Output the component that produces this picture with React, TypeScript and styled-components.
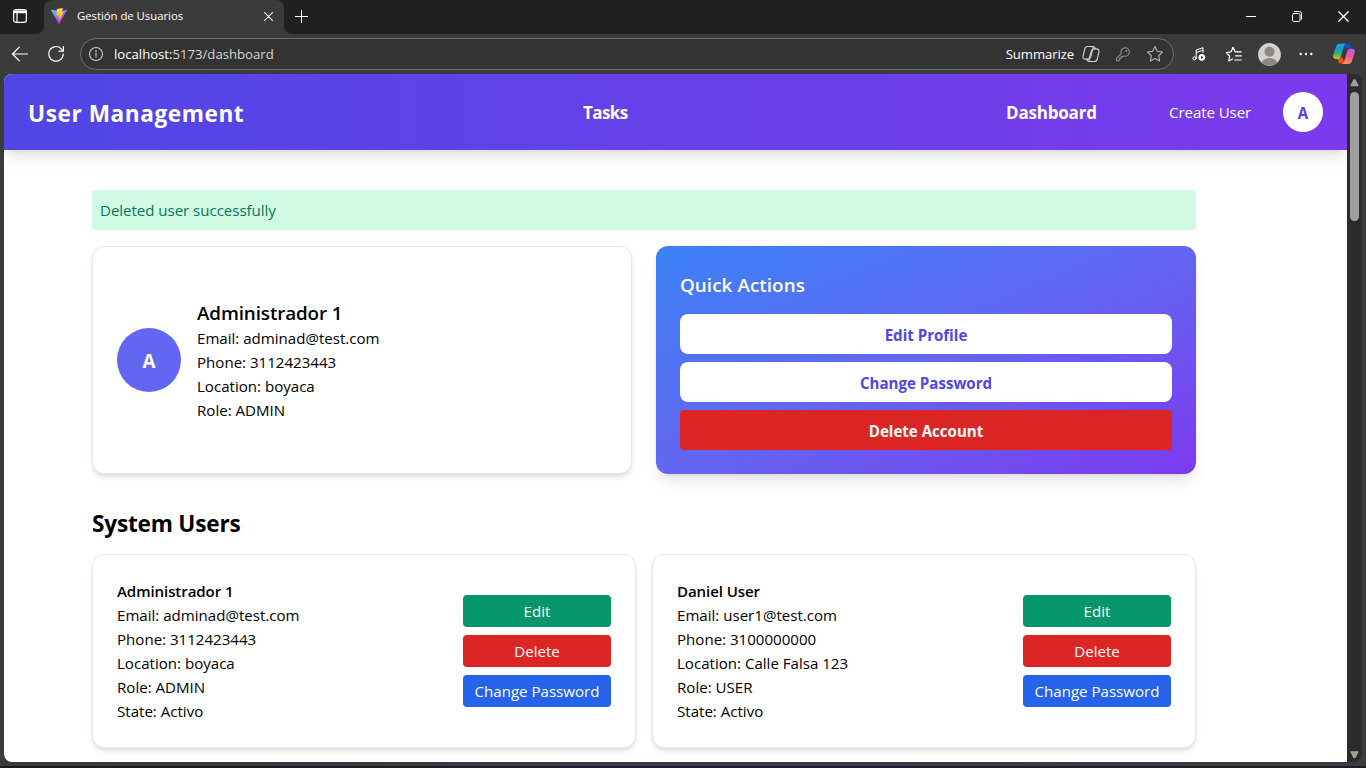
import React from "react";
import styled, { createGlobalStyle, css } from "styled-components";

const GlobalStyle = createGlobalStyle`
  *, *::before, *::after { box-sizing: border-box; }
  body { margin: 0; background: #3b3b3b; overflow: hidden; }
  h1, h2, h3, p { margin: 0; font-size: inherit; font-weight: inherit; }
  button { border: 0; margin: 0; padding: 0; background: none; font: inherit; color: inherit; letter-spacing: inherit; }
  svg { display: block; flex: none; }
`;

const Window = styled.div`
  display: flex;
  flex-direction: column;
  width: 1366px;
  height: 768px;
  background: #3b3b3b;
  font-family: "Open Sans", "Noto Sans", sans-serif;
  overflow: hidden;
`;

/* ---------- browser chrome ---------- */

const TabStrip = styled.div`
  display: flex;
  height: 34px;
  background: #202020;
  color: #fff;
`;

const StripButton = styled.button<{ $width: number }>`
  display: flex;
  align-items: center;
  justify-content: center;
  width: ${(p) => p.$width}px;
  height: 33px;
`;

const TabMenuCorner = styled.div`
  width: 44px;
  background: #3b3b3b;
`;

const TabMenu = styled.div`
  display: flex;
  align-items: center;
  padding: 0 0 2px 12px;
  height: 34px;
  background: #202020;
  border-bottom-right-radius: 8px;
`;

const Tab = styled.div`
  display: flex;
  align-items: center;
  width: 240px;
  height: 34px;
  padding: 0 11px 2px 7px;
  border-radius: 8px 8px 0 0;
  background: #3b3b3b;
`;

const TabTitle = styled.span`
  flex: 1;
  margin: 0 0 2px 10px;
  font-size: 11.4px;
  letter-spacing: -0.05px;
  white-space: nowrap;
`;

const StripRestBase = styled.div`
  flex: 1;
  background: #3b3b3b;
`;

const StripRest = styled.div`
  display: flex;
  justify-content: space-between;
  height: 34px;
  background: #202020;
  border-bottom-left-radius: 8px;
`;

const WindowControls = styled.div`
  display: flex;
`;

const Toolbar = styled.div`
  display: flex;
  align-items: center;
  height: 40px;
  padding: 0 11px 0 11px;
  color: #fff;
`;

const AddressBar = styled.div`
  display: flex;
  align-items: center;
  width: 1094px;
  height: 32px;
  margin-left: 15px;
  padding: 0 9px 0 7px;
  border: 1px solid #6d6d6d;
  border-radius: 16px;
  background: #333;
  font-size: 13.15px;
`;

const Url = styled.span`
  flex: 1;
  margin-left: 10px;
  color: #d6d6d6;
  b { font-weight: 400; color: #fff; }
`;

const Summarize = styled.span`
  margin-right: 8px;
  letter-spacing: -0.1px;
`;

const Spacer = styled.span<{ $size: number }>`
  flex: none;
  width: ${(p) => p.$size}px;
`;

/* ---------- page ---------- */

const Viewport = styled.div`
  display: flex;
  width: 1358px;
  height: 688px;
  margin-left: 4px;
  border-radius: 8px;
  background: #2b2b2b;
  overflow: hidden;
`;

const Page = styled.div`
  width: 1343px;
  height: 688px;
  background: #fff;
  color: #000;
  font-size: 15.08px;
  line-height: 24px;
  overflow: hidden;
`;

const ScrollBar = styled.div`
  display: flex;
  flex-direction: column;
  align-items: center;
  width: 15px;
  padding: 5px 0 3px;
`;

const ScrollThumb = styled.div`
  width: 9px;
  height: 129px;
  margin: 5px 0 auto;
  border-radius: 5px;
  background: #9f9f9f;
`;

const TaskbarEdge = styled.div`
  height: 2px;
  margin-top: 4px;
  background: linear-gradient(90deg, #1b1b20, #182036 50%, #241a2c);
`;

const NavBar = styled.header`
  display: flex;
  align-items: center;
  height: 76px;
  padding: 0 24px;
  background: linear-gradient(90deg, #4f46e5, #7c3aed);
  box-shadow: 0 10px 15px -3px rgba(0, 0, 0, 0.1), 0 4px 6px -4px rgba(0, 0, 0, 0.1);
  color: #fff;
`;

const Brand = styled.h1`
  width: 555px;
  padding-top: 3px;
  font-size: 22.6px;
  font-weight: 700;
  letter-spacing: 0.58px;
`;

const NavLink = styled.span<{ $width: number; $strong?: boolean; $tracking?: number }>`
  width: ${(p) => p.$width}px;
  letter-spacing: ${(p) => p.$tracking ?? 0}px;
  ${(p) => p.$strong && css`
    padding-top: 2px;
    font-size: 17px;
    font-weight: 700;
  `}
`;

const Avatar = styled.div<{ $size: number; $inverted?: boolean }>`
  display: flex;
  flex: none;
  align-items: center;
  justify-content: center;
  width: ${(p) => p.$size}px;
  height: ${(p) => p.$size}px;
  padding-top: ${(p) => (p.$inverted ? 1 : 2)}px;
  border-radius: 50%;
  font-weight: 700;
  font-size: ${(p) => (p.$inverted ? 15.1 : 18.8)}px;
  color: ${(p) => (p.$inverted ? "#4f46e5" : "#fff")};
  background: ${(p) => (p.$inverted ? "#fff" : "#6366f1")};
`;

const Main = styled.main`
  width: 1104px;
  margin: 40px 0 0 88px;
`;

const Alert = styled.div`
  padding: 8px;
  margin-bottom: 16px;
  border-radius: 4px;
  background: #d1fae5;
  color: #047857;
  letter-spacing: -0.04px;
`;

const Grid = styled.section<{ $gap: number }>`
  display: grid;
  grid-template-columns: 1fr 1fr;
  gap: ${(p) => p.$gap}px;
`;

const Card = styled.article`
  display: flex;
  align-items: center;
  padding: 24px;
  border: 1px solid #e5e7eb;
  border-radius: 12px;
  background: #fff;
  box-shadow: 0 4px 6px -1px rgba(0, 0, 0, 0.1), 0 2px 4px -2px rgba(0, 0, 0, 0.1);
`;

const Details = styled.div<{ $indent?: boolean }>`
  flex: 1;
  margin-left: ${(p) => (p.$indent ? 16 : 0)}px;
`;

const ProfileName = styled.h2`
  padding-top: 2px;
  font-size: 18.8px;
  line-height: 26px;
  font-weight: 600;
  letter-spacing: -0.1px;
`;

const UserName = styled.h3`
  font-weight: 600;
  letter-spacing: -0.1px;
`;

const QuickActions = styled.article`
  display: flex;
  flex-direction: column;
  gap: 8px;
  padding: 24px;
  border-radius: 12px;
  background: linear-gradient(to bottom right, #3b82f6, #6366f1, #7c3aed);
  box-shadow: 0 10px 15px -3px rgba(0, 0, 0, 0.1), 0 4px 6px -4px rgba(0, 0, 0, 0.1);
`;

const PanelTitle = styled.h2`
  margin-bottom: 8px;
  padding-top: 2px;
  font-size: 18.8px;
  line-height: 26px;
  font-weight: 600;
  letter-spacing: 0.08px;
  color: #fff;
`;

const ActionButton = styled.button<{ $danger?: boolean }>`
  height: 40px;
  border-radius: ${(p) => (p.$danger ? 4 : 8)}px;
  background: ${(p) => (p.$danger ? "#dc2626" : "#fff")};
  color: ${(p) => (p.$danger ? "#fff" : "#4f46e5")};
  padding-top: 1px;
  font-weight: 700;
`;

const SectionTitle = styled.h2`
  margin: 34px 0 14px;
  font-size: 22.6px;
  line-height: 32px;
  font-weight: 700;
  letter-spacing: -0.2px;
`;

const ButtonStack = styled.div`
  display: flex;
  flex-direction: column;
  gap: 8px;
  width: 148px;
`;

const RowButton = styled.button<{ $color: string }>`
  height: 32px;
  border-radius: 4px;
  background: ${(p) => p.$color};
  color: #fff;
`;

/* ---------- icons ---------- */

const Line = ({ w, h = w, box, sw = 1.2, color = "#fff", children }: {
  w: number; h?: number; box?: string; sw?: number; color?: string; children: React.ReactNode;
}) => (
  <svg width={w} height={h} viewBox={box ?? `0 0 ${w} ${h}`} fill="none" stroke={color} strokeWidth={sw} strokeLinecap="round" strokeLinejoin="round">
    {children}
  </svg>
);

const TabActionsIcon = () => (
  <Line w={16} sw={1.2}>
    <rect x="1.6" y="1.6" width="12.8" height="12.8" rx="2.4" />
    <path d="M2.2 3.2h11.6M2 4.4h12" strokeWidth="1.6" />
    <path d="M5 5v9" />
  </Line>
);

const ViteLogo = () => (
  <svg width="16" height="16" viewBox="0 0 256 257">
    <defs>
      <linearGradient id="viteA" x1="-.828%" x2="57.636%" y1="7.652%" y2="78.411%">
        <stop offset="0%" stopColor="#41D1FF" />
        <stop offset="100%" stopColor="#BD34FE" />
      </linearGradient>
      <linearGradient id="viteB" x1="43.376%" x2="50.316%" y1="2.242%" y2="89.03%">
        <stop offset="0%" stopColor="#FFEA83" />
        <stop offset="8.333%" stopColor="#FFDD35" />
        <stop offset="100%" stopColor="#FFA800" />
      </linearGradient>
    </defs>
    <path fill="url(#viteA)" d="M255.153 37.938L134.897 252.976c-2.483 4.44-8.862 4.466-11.382.048L.875 37.958c-2.746-4.814 1.371-10.646 6.827-9.67l120.385 21.517a6.537 6.537 0 0 0 2.322-.004l117.867-21.483c5.438-.991 9.574 4.796 6.877 9.62Z" />
    <path fill="url(#viteB)" d="M185.432.063L96.44 17.501a3.268 3.268 0 0 0-2.634 3.014l-5.474 92.456a3.268 3.268 0 0 0 3.997 3.378l24.777-5.718c2.318-.535 4.413 1.507 3.936 3.838l-7.361 36.047c-.495 2.426 1.782 4.5 4.151 3.78l15.304-4.649c2.372-.72 4.652 1.36 4.15 3.788l-11.698 56.621c-.732 3.542 3.979 5.473 5.943 2.437l1.313-2.028l72.516-144.72c1.215-2.423-.88-5.186-3.54-4.672l-25.505 4.922c-2.396.462-4.435-1.77-3.759-4.114l16.646-57.705c.677-2.35-1.37-4.583-3.769-4.113Z" />
  </svg>
);

const CloseIcon = ({ size }: { size: number }) => (
  <Line w={size} box="0 0 10 10" sw={1.2}><path d="M.7.7l8.6 8.6M9.3.7L.7 9.3" /></Line>
);

const PlusIcon = () => <Line w={13} sw={1}><path d="M6.5 0v13M0 6.5h13" strokeLinecap="butt" /></Line>;
const MinimizeIcon = () => <Line w={10} h={11} sw={1}><path d="M0 5.5h10" strokeLinecap="butt" /></Line>;
const RestoreIcon = () => (
  <Line w={10} h={11} sw={1}>
    <rect x=".5" y="2.5" width="7.5" height="8" rx="1.2" />
    <path d="M2.5.5H7.5a2 2 0 0 1 2 2v5.7" />
  </Line>
);

const BackIcon = () => <Line w={18} sw={1.2}><path d="M1.5 9h15M8.3 2.2L1.5 9l6.8 6.8" /></Line>;
const ReloadIcon = () => (
  <Line w={18} sw={1.2}>
    <path d="M16.3 9a7.3 7.3 0 1 1-2-5.2L16.2 5.9" />
    <path d="M16.4 1.6v4.5h-4.5" />
  </Line>
);
const InfoIcon = () => (
  <Line w={16} sw={1.1} color="#c9c9c9">
    <circle cx="8" cy="8" r="6.5" />
    <path d="M8 7.3v3.6" />
    <circle cx="8" cy="5.1" r=".35" fill="#c9c9c9" />
  </Line>
);
const CopilotOutlineIcon = () => (
  <Line w={18} sw={1.15} color="#d0d0d0">
    <path d="M5.6 1.5h3.6c1.5 0 2.1 1 1.7 2.4L8.6 12c-.4 1.400-1.300 2.100-2.700 2.100H3.400c-1.800 0-2.700-1.200-2.300-2.900L2.700 4C3.100 2.400 4 1.500 5.600 1.500z" />
    <path d="M12.400 16.500H8.800c-1.500 0-2.100-1-1.700-2.400L9.400 6c.4-1.400 1.300-2.100 2.700-2.100h2.500c1.800 0 2.700 1.200 2.300 2.900L15.300 14c-.4 1.600-1.300 2.500-2.900 2.500z" />
    <path d="M9.200 1.500h2c1 0 1.500.5 1.700 1.300l.3 1.100M8.800 16.500h-2c-1 0-1.500-.5-1.700-1.300l-.3-1.100" />
  </Line>
);
const KeyIcon = () => (
  <Line w={16} sw={1.1} color="#8a8a8a">
    <path d="M6.3 7.6a4.2 4.2 0 1 1 2.3 2.3L7.6 10.900H6.100v1.500H4.600v1.500L3.700 14.800H1.500v-2.300z" />
    <circle cx="11.300" cy="5" r=".5" fill="#8a8a8a" />
  </Line>
);
const StarIcon = () => (
  <Line w={18} sw={1.1} color="#b5b5b5">
    <path d="M9 1.500l2.300 4.800 5.200.7-3.800 3.700.9 5.200L9 13.400l-4.600 2.500.9-5.200L1.500 7l5.200-.7z" />
  </Line>
);
const MusicIcon = () => (
  <Line w={15} h={16} sw={1}>
    <path d="M4.200 12.200V4l6.800-2.300v4.800M4.200 6.500L11 4.200" />
    <circle cx="2.500" cy="12.400" r="1.600" />
    <circle cx="9.800" cy="11.400" r="3" fill="#fff" />
    <path d="M9 9.800v3.200l2.500-1.600z" fill="#3b3b3b" stroke="none" />
  </Line>
);
const FavoritesIcon = () => (
  <Line w={18} h={17} sw={1.2}>
    <path d="M9.700 4.800L8 1.500 5.900 5.900 1.200 6.600l3.400 3.400-.8 5L7.500 13" />
    <path d="M8 1.500l2.200 4.300h6.100M10.700 9.900h5.600M9.700 14h6.600" />
  </Line>
);
const ProfileIcon = () => (
  <svg width="23" height="23" viewBox="0 0 23 23">
    <defs><clipPath id="pc"><circle cx="11.500" cy="11.500" r="11.200" /></clipPath></defs>
    <circle cx="11.500" cy="11.500" r="11.400" fill="#d2d0ce" />
    <g clipPath="url(#pc)" fill="#8a8785">
      <circle cx="11.500" cy="8.700" r="5" />
      <ellipse cx="11.500" cy="21" rx="8" ry="6" />
    </g>
  </svg>
);
const DotsIcon = () => (
  <svg width="14" height="4" viewBox="0 0 14 4" fill="#fff">
    <circle cx="1.700" cy="2" r="1.200" /><circle cx="7" cy="2" r="1.200" /><circle cx="12.300" cy="2" r="1.200" />
  </svg>
);
const CopilotIcon = () => (
  <svg width="22" height="22" viewBox="0 0 22 22">
    <defs>
      <linearGradient id="c1" x1="8" y1="0" x2="5" y2="17" gradientUnits="userSpaceOnUse">
        <stop offset="0" stopColor="#1aa5f0" /><stop offset=".4" stopColor="#149bd0" /><stop offset=".7" stopColor="#52b45a" /><stop offset="1" stopColor="#e8c51c" />
      </linearGradient>
      <linearGradient id="c2" x1="17" y1="5" x2="14" y2="22" gradientUnits="userSpaceOnUse">
        <stop offset="0" stopColor="#b45cf0" /><stop offset=".5" stopColor="#ee5a92" /><stop offset="1" stopColor="#ff9a57" />
      </linearGradient>
    </defs>
    <path fill="#1550c8" d="M9 .7h6c1.300 0 2 .7 2.300 1.800l.9 3.100h-4.600z" />
    <path fill="#f2501c" d="M4 14.500h5.600l2 6.100H8c-1.500 0-2.100-.7-2.500-1.800z" />
    <path fill="url(#c1)" d="M6.600.7h6.500c-1.300.3-1.900 1.300-2.300 2.700l-2.600 9c-.7 2.300-1.500 3.500-3.700 3.500H2.900C.6 15.900-.3 14.200.3 12.100L3 3.600C3.600 1.700 4.800.7 6.600.7z" />
    <path fill="url(#c2)" d="M15.400 20.900H8.900c1.300-.3 1.900-1.300 2.300-2.700l2.600-9c.7-2.300 1.500-3.500 3.700-3.500h1.600c2.300 0 3.200 1.700 2.600 3.800L19 18c-.6 1.900-1.800 2.900-3.600 2.900z" />
  </svg>
);
const ScrollArrow = ({ down }: { down?: boolean }) => (
  <svg width="9" height="8" viewBox="0 0 9 8">
    <path d={down ? "M1 .8h7L5.2 6.5H3.8z" : "M1 6.6h7L5.2 .9H3.8z"} fill="#9f9f9f" stroke="#9f9f9f" strokeWidth="1.2" strokeLinejoin="round" />
  </svg>
);

/* ---------- data ---------- */

const profile = ["Email: adminad@test.com", "Phone: 3112423443", "Location: boyaca", "Role: ADMIN"];

const users = [
  { name: "Administrador 1", lines: [...profile, "State: Activo"] },
  { name: "Daniel User", lines: ["Email: user1@test.com", "Phone: 3100000000", "Location: Calle Falsa 123", "Role: USER", "State: Activo"] },
];

const BrowserChrome = () => (
  <>
    <TabStrip>
      <TabMenuCorner><TabMenu><TabActionsIcon /></TabMenu></TabMenuCorner>
      <Tab>
        <ViteLogo />
        <TabTitle>Gestión de Usuarios</TabTitle>
        <CloseIcon size={9} />
      </Tab>
      <StripRestBase>
        <StripRest>
          <StripButton $width={35}><PlusIcon /></StripButton>
          <WindowControls>
            <StripButton $width={46}><MinimizeIcon /></StripButton>
            <StripButton $width={46}><RestoreIcon /></StripButton>
            <StripButton $width={46}><CloseIcon size={11} /></StripButton>
          </WindowControls>
        </StripRest>
      </StripRestBase>
    </TabStrip>
    <Toolbar>
      <BackIcon />
      <Spacer $size={18} />
      <ReloadIcon />
      <AddressBar>
        <InfoIcon />
        <Url><b>localhost:</b>5173/dashboard</Url>
        <Summarize>Summarize</Summarize>
        <CopilotOutlineIcon />
        <Spacer $size={15} />
        <KeyIcon />
        <Spacer $size={15} />
        <StarIcon />
      </AddressBar>
      <Spacer $size={18} />
      <MusicIcon />
      <Spacer $size={18} />
      <FavoritesIcon />
      <Spacer $size={15} />
      <ProfileIcon />
      <Spacer $size={18} />
      <DotsIcon />
      <Spacer $size={20} />
      <CopilotIcon />
    </Toolbar>
  </>
);

export default function App() {
  return (
    <Window>
      <GlobalStyle />
      <BrowserChrome />
      <Viewport>
        <Page>
          <NavBar>
            <Brand>User Management</Brand>
            <NavLink $width={423} $strong $tracking={-0.6}>Tasks</NavLink>
            <NavLink $width={163} $strong $tracking={-0.2}>Dashboard</NavLink>
            <NavLink $width={114} $tracking={-0.08}>Create User</NavLink>
            <Avatar $size={40} $inverted>A</Avatar>
          </NavBar>
          <Main>
            <Alert>Deleted user successfully</Alert>
            <Grid $gap={24}>
              <Card>
                <Avatar $size={64}>A</Avatar>
                <Details $indent>
                  <ProfileName>Administrador 1</ProfileName>
                  {profile.map((line) => <p key={line}>{line}</p>)}
                </Details>
              </Card>
              <QuickActions>
                <PanelTitle>Quick Actions</PanelTitle>
                <ActionButton>Edit Profile</ActionButton>
                <ActionButton>Change Password</ActionButton>
                <ActionButton $danger>Delete Account</ActionButton>
              </QuickActions>
            </Grid>
            <SectionTitle>System Users</SectionTitle>
            <Grid $gap={16}>
              {users.map((user) => (
                <Card key={user.name}>
                  <Details>
                    <UserName>{user.name}</UserName>
                    {user.lines.map((line) => <p key={line}>{line}</p>)}
                  </Details>
                  <ButtonStack>
                    <RowButton $color="#059669">Edit</RowButton>
                    <RowButton $color="#dc2626">Delete</RowButton>
                    <RowButton $color="#2563eb">Change Password</RowButton>
                  </ButtonStack>
                </Card>
              ))}
            </Grid>
          </Main>
        </Page>
        <ScrollBar>
          <ScrollArrow />
          <ScrollThumb />
          <ScrollArrow down />
        </ScrollBar>
      </Viewport>
      <TaskbarEdge />
    </Window>
  );
}
